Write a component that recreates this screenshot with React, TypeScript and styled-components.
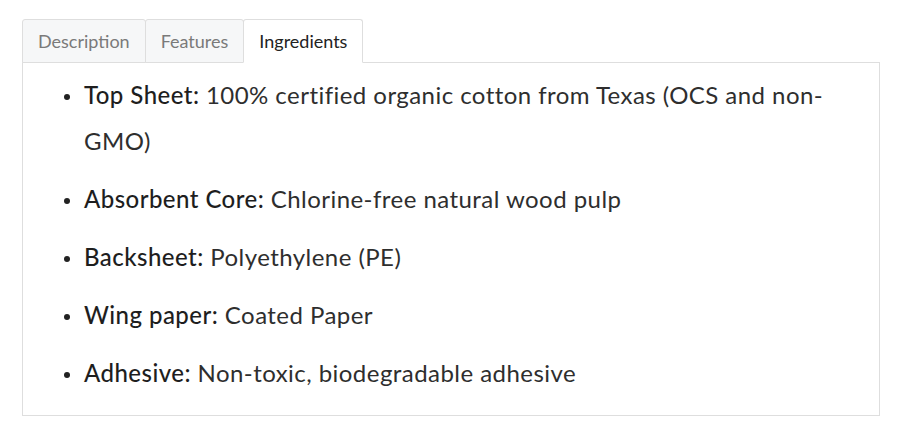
import React, { useState } from "react";
import styled, { createGlobalStyle } from "styled-components";

const GlobalStyle = createGlobalStyle`
  body {
    margin: 0;
    background: #fff;
    font-family: Lato, "Open Sans", sans-serif;
    color: #333;
  }
`;

const Page = styled.div`
  padding: 19px 0 0 22px;
`;

const TabsWrap = styled.div`
  width: 858px;
`;

const TabList = styled.div`
  display: flex;
  margin-bottom: -1px;
`;

const Tab = styled.button<{ $active?: boolean }>`
  font-family: inherit;
  font-size: 18px;
  height: 44px;
  padding: 0 15px;
  margin-right: -1px;
  border: 1px solid #dedede;
  border-bottom-color: ${(p) => (p.$active ? "#fff" : "#dedede")};
  border-radius: 3px 3px 0 0;
  background: ${(p) => (p.$active ? "#fff" : "#f6f7f8")};
  color: ${(p) => (p.$active ? "#222" : "#7a7a7a")};
  cursor: pointer;
  position: relative;
  z-index: ${(p) => (p.$active ? 1 : 0)};
`;

const Panel = styled.div`
  border: 1px solid #dedede;
  padding: 9px 20px 19px 0;
`;

const List = styled.ul`
  margin: 0;
  padding-left: 41px;
  list-style: none;
`;

const Item = styled.li`
  display: flex;
  align-items: flex-start;
  gap: 14px;
  font-size: 24px;
  line-height: 46px;
  letter-spacing: 0.45px;
  margin-bottom: 12px;
  color: #2e2e2e;
  &:last-child {
    margin-bottom: 0;
  }
`;

const Dot = styled.span`
  flex: none;
  width: 6px;
  height: 6px;
  margin-top: 22px;
  border-radius: 50%;
  background: #222;
`;

const Label = styled.span`
  font-weight: 500;
  color: #1e1e1e;
`;

const items = [
  ["Top Sheet", "100% certified organic cotton from Texas (OCS and non-GMO)"],
  ["Absorbent Core", "Chlorine-free natural wood pulp"],
  ["Backsheet", "Polyethylene (PE)"],
  ["Wing paper", "Coated Paper"],
  ["Adhesive", "Non-toxic, biodegradable adhesive"],
];

export default function App() {
  const [tab, setTab] = useState("Ingredients");
  return (
    <Page>
      <GlobalStyle />
      <TabsWrap>
        <TabList>
          {["Description", "Features", "Ingredients"].map((t) => (
            <Tab key={t} $active={tab === t} onClick={() => setTab(t)}>
              {t}
            </Tab>
          ))}
        </TabList>
        <Panel>
          <List>
            {items.map(([label, text]) => (
              <Item key={label}>
                <Dot />
                <span>
                  <Label>{label}:</Label> {text}
                </span>
              </Item>
            ))}
          </List>
        </Panel>
      </TabsWrap>
    </Page>
  );
}
